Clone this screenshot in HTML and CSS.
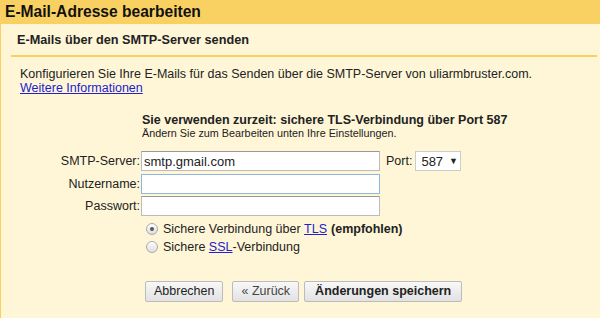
FILE: index.html
```html
<!DOCTYPE html>
<html lang="de">
<head>
    <meta charset="UTF-8">
    <title>E-Mail-Adresse bearbeiten</title>
    <link rel="stylesheet" href="styles.css">
</head>
<body>
    <div class="title">E-Mail-Adresse bearbeiten</div>
    <div class="panel">
        <div class="subhead">E-Mails über den SMTP-Server senden</div>

        <p class="intro">
            Konfigurieren Sie Ihre E-Mails für das Senden über die SMTP-Server von uliarmbruster.com.<br>
            <a href="#">Weitere Informationen</a>
        </p>

        <div class="form">
            <div></div>
            <div class="status">
                <div class="status-main">Sie verwenden zurzeit: sichere TLS-Verbindung über Port 587</div>
                <div class="status-hint">Ändern Sie zum Bearbeiten unten Ihre Einstellungen.</div>
            </div>

            <label class="label">SMTP-Server:</label>
            <div class="field">
                <input class="text-input" type="text" value="smtp.gmail.com">
                <span class="port-label">Port:</span>
                <span class="select">587 <span class="arrow">▼</span></span>
            </div>

            <label class="label">Nutzername:</label>
            <div class="field">
                <input class="text-input focused" type="text" value="">
            </div>

            <label class="label">Passwort:</label>
            <div class="field">
                <input class="text-input" type="password" value="">
            </div>

            <div></div>
            <div class="options">
                <div class="option"><span class="radio checked"></span>Sichere Verbindung über <a href="#">TLS</a> <b>(empfohlen)</b></div>
                <div class="option"><span class="radio"></span>Sichere <a href="#">SSL</a>-Verbindung</div>
            </div>

            <div></div>
            <div class="buttons">
                <button class="btn">Abbrechen</button>
                <button class="btn back">« Zurück</button>
                <button class="btn primary">Änderungen speichern</button>
            </div>
        </div>
    </div>
</body>
</html>
```

FILE: styles.css
```css
* {
    margin: 0;
    padding: 0;
    box-sizing: border-box;
}

body {
    font-family: 'Liberation Sans', Arial, sans-serif;
    font-size: 12.5px;
    color: #222;
    background-color: #fff6d8;
    height: 318px;
    overflow: hidden;
}

.title {
    height: 24px;
    line-height: 24px;
    padding-left: 5px;
    background-color: #f9d162;
    font-size: 15.6px;
    font-weight: bold;
    color: #111;
}

.panel {
    background-color: #fff6d8;
    border-left: 1px solid #f9d162;
    height: 294px;
}

.subhead {
    margin: 0 3px 0 10px;
    padding: 8px 0 7px 6px;
    line-height: 16px;
    font-size: 12.7px;
    font-weight: bold;
    border-bottom: 2px solid #f9d162;
}

.intro {
    margin-top: 10px;
    padding-left: 19px;
    line-height: 14px;
}

a {
    color: #2222cc;
}

.form {
    display: grid;
    grid-template-columns: 140px auto;
    margin-top: 18px;
    align-items: center;
}

.status {
    padding-left: 1px;
    margin-bottom: 11px;
}

.status-main {
    font-weight: bold;
    line-height: 14px;
}

.status-hint {
    font-size: 10.8px;
    line-height: 12px;
}

.label {
    text-align: right;
    padding-right: 1px;
    line-height: 22px;
}

.field {
    display: flex;
    align-items: center;
    height: 22.5px;
}

.text-input {
    width: 239px;
    height: 20px;
    border: 1px solid #bbb;
    border-top-color: #999;
    background: #fff;
    font-family: inherit;
    font-size: 13px;
    padding: 0 2px;
    color: #222;
    outline: none;
}

.text-input.focused {
    border: 1px solid #8eb6e8;
}

.port-label {
    margin-left: 6px;
    margin-right: 3px;
}

.select {
    display: inline-flex;
    align-items: center;
    height: 20px;
    width: 46px;
    padding-left: 5px;
    border: 1px solid #ccc;
    background: #fff;
    font-size: 13px;
}

.arrow {
    font-size: 9px;
    margin-left: 6px;
}

.options {
    margin-top: 2px;
    padding-left: 5px;
}

.option {
    display: flex;
    align-items: center;
    height: 18px;
    white-space: pre;
}

.option b {
    margin-left: 4px;
}

.radio {
    width: 12px;
    height: 12px;
    border-radius: 50%;
    border: 1px solid #aaa;
    background: linear-gradient(#fff, #ddd);
    margin-right: 5px;
    position: relative;
}

.radio.checked::after {
    content: '';
    position: absolute;
    left: 3px;
    top: 3px;
    width: 4px;
    height: 4px;
    border-radius: 50%;
    background: #555;
}

.buttons {
    display: flex;
    gap: 8px;
    margin-top: 25px;
    padding-left: 4px;
}

.btn {
    height: 21px;
    padding: 0 8px;
    font-family: inherit;
    font-size: 12.5px;
    color: #222;
    border: 1px solid #bbb;
    border-radius: 2px;
    background: linear-gradient(#f8f8f8, #e2e2e2);
}

.btn.back {
    margin-left: 1px;
    color: #444;
}

.btn.primary {
    margin-left: -3px;
    padding: 0 10px;
    font-weight: bold;
}
```
